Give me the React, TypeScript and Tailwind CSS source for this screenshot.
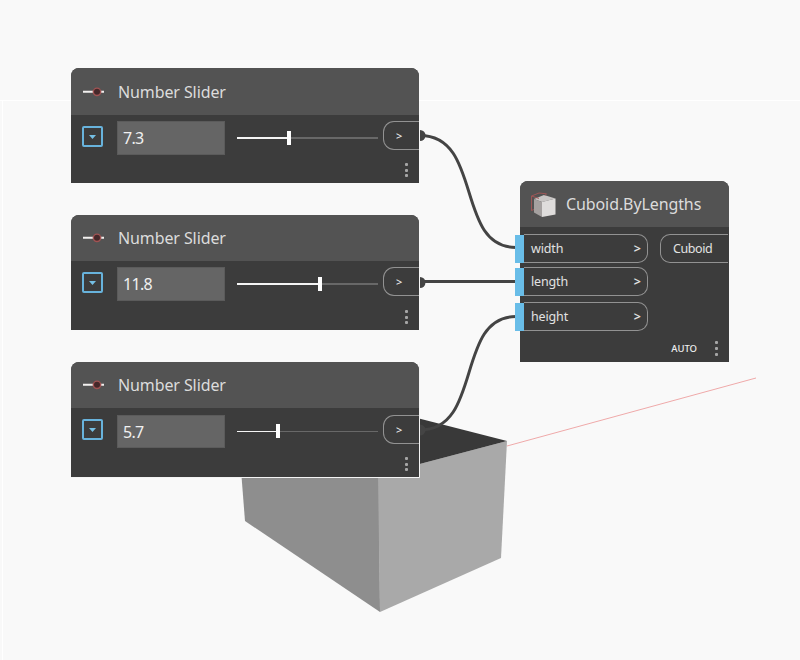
import React from "react";

type SliderNodeProps = {
  value: string;
  fill: number;
  className: string;
  header: string;
  body: string;
  toggle: string;
  field: string;
  rail: string;
  track: string;
};

function Dots({ gap }: { gap: string }) {
  return (
    <div className={`flex flex-col items-center ${gap}`}>
      {[0, 1, 2].map((i) => (
        <span key={i} className="size-[3px] rounded-[1px] bg-[#a6a6a6]" />
      ))}
    </div>
  );
}

function SliderNode({ value, fill, className, header, body, toggle, field, rail, track }: SliderNodeProps) {
  return (
    <section className={`absolute left-[71px] flex h-[115px] w-[348px] flex-col overflow-hidden rounded-t-lg bg-[#3c3c3c] ${className}`}>
      <header className={`flex shrink-0 items-center bg-[#535353] pl-3 ${header}`}>
        <svg width="22" height="12" viewBox="0 0 22 12" className="shrink-0">
          <path d="M0 5.8H21" stroke="#f2f0ef" strokeWidth="2" />
          <circle cx="14" cy="5.8" r="3.7" fill="#45282a" stroke="#a05353" strokeWidth="1.4" />
        </svg>
        <h2 className="ml-[13px] text-base leading-6 tracking-[-0.1px] whitespace-nowrap text-[#dcdcdc]">Number Slider</h2>
      </header>
      <div className={`flex items-start pl-[11px] ${body}`}>
        <button className={`flex size-[21px] shrink-0 items-center justify-center rounded-[2px] border-2 border-[#68b3dc] ${toggle}`}>
          <svg width="7" height="4" viewBox="0 0 7 4">
            <path d="M0 0H7L3.5 4Z" fill="#75bfe4" />
          </svg>
        </button>
        <div className={`ml-[14px] flex w-[108px] shrink-0 items-center border border-[#5b5b5b] bg-[#656565] pl-[5px] text-base leading-6 tracking-[-0.7px] text-[#f0f0f0] ${field}`}>
          {value}
        </div>
        <div className={`ml-3 flex h-4 w-[141px] shrink-0 items-center ${rail}`}>
          <span className={`shrink-0 bg-[#f5f5f5] ${track}`} style={{ width: fill }} />
          <span className="h-[14px] w-1 shrink-0 bg-white" />
          <span className={`flex-1 bg-[#686868] ${track}`} />
        </div>
        <div className="ml-[5px] flex h-[29px] flex-1 items-center rounded-l-[11px] border border-r-0 border-[#929292] pb-px pl-[12px] text-[11px] leading-none font-medium text-[#eeeeee]">
          &gt;
        </div>
      </div>
      <div className="mt-auto flex justify-end pr-[11px] pb-[6px]">
        <Dots gap="gap-[2.5px]" />
      </div>
    </section>
  );
}

function InputPort({ label, className }: { label: string; className: string }) {
  return (
    <div className={`-ml-[5px] flex h-[29px] w-[133px] items-center ${className}`}>
      <span className="h-[28px] w-[9px] shrink-0 bg-[#69bde8]" />
      <div className="flex h-[29px] flex-1 items-center justify-between rounded-r-[10px] border border-l-0 border-[#929292] pt-px pr-[6px] pl-[7px] text-[12.5px] leading-none text-[#e2e2e2]">
        <span className="tracking-[-0.15px]">{label}</span>
        <span className="font-semibold">&gt;</span>
      </div>
    </div>
  );
}

function CuboidNode() {
  return (
    <section className="absolute left-[520px] top-[181px] flex h-[181px] w-[209px] flex-col rounded-t-lg bg-[#3c3c3c]">
      <header className="flex h-[46px] shrink-0 items-center rounded-t-lg bg-[#535353] pl-[10px]">
        <svg width="27" height="27" viewBox="0 0 27 27" className="shrink-0">
          <path d="M4 8L14 4L25.5 7.5L12 11Z" fill="#c9c6c5" />
          <path d="M4 8L12 11V26L4 21.5Z" fill="#a5a1a0" />
          <path d="M12 11L25.5 7.5V23.5L12 26Z" fill="#dfdddc" />
          <path d="M1.5 19.5V5L9 2L16.5 2.8L15 4.5M1.5 5L9 7.5M1.5 19.5L4 18.5" fill="none" stroke="#a65757" strokeWidth="0.9" />
        </svg>
        <h2 className="ml-[9px] text-base leading-6 tracking-[-0.1px] whitespace-nowrap text-[#dcdcdc]">Cuboid.ByLengths</h2>
      </header>
      <div className="flex items-start justify-between pt-[7px]">
        <div className="flex flex-col">
          <InputPort label="width" className="" />
          <InputPort label="length" className="mt-1" />
          <InputPort label="height" className="mt-[6px]" />
        </div>
        <div className="mr-px flex h-[29px] w-[68px] items-center rounded-l-[10px] border border-r-0 border-[#929292] pt-px pl-3 text-[12.5px] leading-none tracking-[-0.4px] text-[#e2e2e2]">
          Cuboid
        </div>
      </div>
      <footer className="mt-auto flex h-[27px] items-center justify-end pr-[11px]">
        <span className="mr-[18px] pt-px text-[9.5px] leading-none font-medium text-[#eeeeee]">AUTO</span>
        <Dots gap="gap-[3px]" />
      </footer>
    </section>
  );
}

export default function App() {
  return (
    <main className="relative h-[660px] w-[800px] overflow-hidden bg-[#f9f9f9] font-['Noto_Sans',sans-serif]">
      <svg width="800" height="660" viewBox="0 0 800 660" className="absolute inset-0">
        <path d="M0 100.5H800M2.5 100V660" stroke="#ffffff" />
        <path d="M507 446L756 378" stroke="#efa9a9" strokeWidth="1" />
        <path d="M241 470L379 470L380 612L245 521Z" fill="#8e8e8e" />
        <path d="M378 475L507 441L501 558L380 612Z" fill="#a9a9a9" />
        <path d="M378 408L507 441L378 475Z" fill="#393939" />
        <path d="M71 477.5H419.5V362" fill="none" stroke="#f4f4f4" />
        <g fill="none" stroke="#444444" strokeWidth="3">
          <path d="M420 135.5C483 135.5 455 247.5 516 247.5" />
          <path d="M420 281.5H516" />
          <path d="M420 430C483 430 455 316.5 516 316.5" />
        </g>
        <g fill="#444444">
          <path d="M420 130a5.5 5.5 0 0 1 0 11Z" />
          <path d="M420 277a5.5 5.5 0 0 1 0 11Z" />
          <path d="M420 424.5a5.5 5.5 0 0 1 0 11Z" />
        </g>
      </svg>
      <SliderNode value="7.3" fill={50} className="top-[68px]" header="h-[47px]" body="pt-[6px]" toggle="mt-[5px]" field="h-[34px]" rail="mt-[9px]" track="h-[2px]" />
      <SliderNode value="11.8" fill={81} className="top-[215px]" header="h-[46px]" body="pt-[6px]" toggle="mt-[5px]" field="h-[34px]" rail="mt-[9px]" track="h-[2px]" />
      <SliderNode value="5.7" fill={39} className="top-[362px]" header="h-[46px]" body="pt-[7px]" toggle="mt-[4px]" field="h-[33px]" rail="mt-[8px]" track="h-px" />
      <CuboidNode />
    </main>
  );
}
